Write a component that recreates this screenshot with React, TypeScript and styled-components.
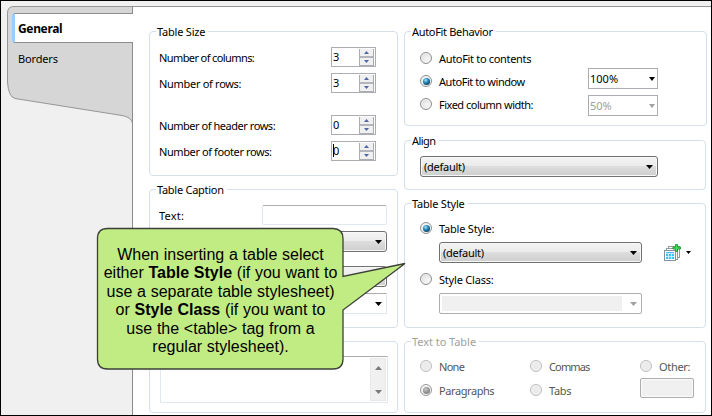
import React from "react";
import styled, { createGlobalStyle, css } from "styled-components";

const GlobalStyle = createGlobalStyle`
  *, *::before, *::after { box-sizing: border-box; }
  body { margin: 0; overflow: hidden; }
`;

const Window = styled.div`
  position: relative;
  display: flex;
  width: 712px;
  height: 416px;
  border: 1px solid #000;
  background: #f0f0f0;
  font: 11px/14px "Noto Sans", Tahoma, sans-serif;
  letter-spacing: -0.3px;
  color: #000;
  overflow: hidden;
`;

const Sidebar = styled.nav`
  position: relative;
  flex: none;
  width: 132px;
  display: flex;
  flex-direction: column;
  padding: 12px 0 0 11px;
`;

const SidebarShape = styled.svg`
  position: absolute;
  left: 0;
  top: 0;
`;

const Tab = styled.div<{ $active?: boolean }>`
  position: relative;
  height: 30px;
  line-height: 30px;
  padding-left: 5px;
  border: 1px solid transparent;
  border-right: 0;
  letter-spacing: -0.15px;
  ${({ $active }) =>
    $active &&
    css`
      background: #fff;
      border-color: #8c8c8c;
      border-left: 3px solid #99ccff;
      border-radius: 3px 0 0 3px;
      padding-left: 3px;
      font-size: 12px;
      font-weight: 700;
      letter-spacing: -0.35px;
    `}
`;

const Page = styled.main`
  flex: 1;
  display: grid;
  grid-template-columns: 249px 303px;
  column-gap: 6px;
  align-items: start;
  margin-top: 5px;
  padding: 24px 0 0 16px;
  border-top: 1px solid #969696;
  background: #fff;
`;

const Column = styled.div`
  display: flex;
  flex-direction: column;
  gap: 13px;
`;

const Group = styled.section<{ $h: number; $w?: number; $top?: number }>`
  display: flex;
  flex-direction: column;
  width: ${({ $w }) => ($w ? `${$w}px` : "auto")};
  height: ${({ $h }) => $h}px;
  margin-top: ${({ $top }) => $top ?? 0}px;
  border: 1px solid #d5dfe9;
  border-radius: 4px;
`;

const Legend = styled.h2<{ $disabled?: boolean; $ls?: number }>`
  align-self: flex-start;
  height: 14px;
  margin: -8px 0 0 6px;
  padding: 0 3px 0 1px;
  background: #fff;
  color: ${({ $disabled }) => ($disabled ? "#a0a0a0" : "#000")};
  font-size: 11px;
  font-weight: 400;
  line-height: 15px;
  letter-spacing: ${({ $ls }) => $ls ?? -0.2}px;
`;

const Row = styled.div<{ $top: number; $left?: number; $h?: number }>`
  display: flex;
  align-items: center;
  flex: none;
  height: ${({ $h }) => $h ?? 21}px;
  margin-top: ${({ $top }) => $top}px;
  padding-left: ${({ $left }) => $left ?? 9}px;
`;

const AutoFitFields = styled.div`
  display: grid;
  grid-template-columns: 168px 70px;
  align-items: start;
  padding: 13px 0 0 15px;
`;

const Stack = styled.div<{ $gap: number; $top?: number }>`
  display: flex;
  flex-direction: column;
  gap: ${({ $gap }) => $gap}px;
  margin-top: ${({ $top }) => $top ?? 0}px;
`;

const Label = styled.span<{ $w?: number; $ls?: number }>`
  flex: none;
  width: ${({ $w }) => ($w ? `${$w}px` : "auto")};
  padding-top: 1px;
  letter-spacing: ${({ $ls }) => $ls ?? -0.3}px;
  white-space: nowrap;
`;

const Spinner = styled.div`
  display: flex;
  width: 45px;
  height: 20px;
  border: 1px solid #abadb3;
  background: #fff;
`;

const SpinnerValue = styled.span`
  flex: 1;
  padding-left: 1px;
  line-height: 17px;
`;

const Caret = styled.i`
  float: left;
  width: 1px;
  height: 13px;
  margin: 2px -1px 0 0;
  background: #000;
`;

const SpinnerButtons = styled.div`
  display: flex;
  flex-direction: column;
  width: 15px;
  margin: 1px 1px 0 0;
  border: 1px solid #abadb3;
  border-top: 0;
  height: 17px;
`;

const SpinnerButton = styled.div`
  flex: 1;
  display: flex;
  align-items: center;
  justify-content: center;
  background: #f0f0f0;
  & + & {
    border-top: 2px solid #b4b5bb;
  }
`;

const TextInput = styled.div<{ $w: number; $disabled?: boolean }>`
  width: ${({ $w }) => $w}px;
  height: 20px;
  border: 1px solid #e2e8ef;
  border-top-color: #abadb3;
  border-radius: 2px;
  background: #fff;
  ${({ $disabled }) =>
    $disabled &&
    css`
      border-color: #adadad;
      background: #f0f0f0;
      box-shadow: inset 0 0 0 1px #fafafa;
    `}
`;

const looks = {
  button: css`
    border: 1px solid #707070;
    border-radius: 3px;
    background: linear-gradient(#f3f3f3, #ebebeb 48%, #dddddd 50%, #cecece);
    box-shadow: inset 0 0 0 1px #f8f8f8;
  `,
  flat: css`
    border: 1px solid #abadb3;
    background: #fff;
  `,
  light: css`
    border: 1px solid #e2e8ef;
    border-top-color: #abadb3;
    background: #fff;
  `,
  muted: css`
    border: 1px solid #adadad;
    border-radius: 2px;
    background: #fff;
  `,
};

const ComboBox = styled.div<{
  $w: number;
  $look: keyof typeof looks;
  $disabled?: boolean;
}>`
  display: flex;
  align-items: center;
  flex: none;
  justify-content: space-between;
  width: ${({ $w }) => $w}px;
  height: 21px;
  padding: ${({ $look }) => ($look === "flat" ? "0 2px 0 1px" : "0 4px 0 3px")};
  letter-spacing: ${({ $look }) => ($look === "flat" ? "0" : "-0.25px")};
  color: ${({ $disabled }) => ($disabled ? "#a0a0a0" : "#000")};
  ${({ $look }) => looks[$look]}
`;

const EmptyField = styled.span`
  width: 180px;
  height: 15px;
  margin-left: -1px;
  background: #f0f0f0;
`;

const RadioOption = styled.div<{ $w?: number; $disabled?: boolean; $top?: number }>`
  display: flex;
  align-items: center;
  flex: none;
  gap: 7px;
  width: ${({ $w }) => ($w ? `${$w}px` : "auto")};
  height: 14px;
  margin-top: ${({ $top }) => $top ?? 0}px;
  color: ${({ $disabled }) => ($disabled ? "#555" : "#000")};
`;

const RadioRing = styled.span<{ $checked?: boolean; $disabled?: boolean }>`
  display: flex;
  align-items: center;
  justify-content: center;
  flex: none;
  width: 12px;
  height: 12px;
  border: 1px solid ${({ $disabled }) => ($disabled ? "#bcbcbc" : "#8e8f8f")};
  border-radius: 50%;
  box-shadow: inset 0 0 0 1px #f4f4f4;
  background: ${({ $checked }) =>
    $checked ? "#f0f0f0" : "radial-gradient(circle at 65% 65%, #f2f2f2 20%, #d4d4d4)"};
  ${({ $disabled, $checked }) =>
    $disabled && !$checked && "background: #ebebeb;"}
  ${({ $disabled, $checked }) => $disabled && $checked && "border-color: #999;"}
  &::after {
    content: "";
    display: ${({ $checked }) => ($checked ? "block" : "none")};
    width: 7px;
    height: 7px;
    flex: none;
    border-radius: 50%;
    background: ${({ $disabled }) =>
      $disabled
        ? "radial-gradient(circle at 40% 35%, #c8c8c8, #8c8c8c 55%, #858585)"
        : "radial-gradient(circle at 38% 32%, #a8e4fa, #2c8fc0 35%, #123f60 75%)"};
  }
`;

const TextArea = styled.div`
  display: flex;
  justify-content: flex-end;
  width: 228px;
  height: 47px;
  padding: 1px;
  border: 1px solid #e2e8ef;
  border-top-color: #abadb3;
  background: #fff;
`;

const ScrollBar = styled.div`
  display: flex;
  flex-direction: column;
  align-items: center;
  justify-content: space-between;
  width: 16px;
  padding: 7px 0 6px;
  border: 1px solid #e8e8e8;
  background: #f0f0f0;
`;

const StyleMenu = styled.div`
  display: flex;
  align-items: center;
  gap: 5px;
  margin-left: 22px;
`;

const Callout = styled.aside`
  position: absolute;
  left: 96px;
  top: 227px;
  width: 247px;
  height: 142px;
`;

const CalloutShape = styled.svg`
  position: absolute;
  left: 0;
  top: 0;
  overflow: visible;
`;

const CalloutText = styled.p`
  position: relative;
  margin: 18px 0 0;
  font: 16px/18.45px "Liberation Sans", Arial, sans-serif;
  letter-spacing: 0;
  word-spacing: 0.3px;
  text-align: center;
  white-space: nowrap;
`;

function Arrow({ color = "#000", up = false, w = 7, h = 4 }) {
  return (
    <svg width={w} height={h} viewBox={`0 0 ${w} ${h}`}>
      <path
        d={up ? `M0 ${h}H${w}L${w / 2} 0Z` : `M0 0H${w}L${w / 2} ${h}Z`}
        fill={color}
      />
    </svg>
  );
}

function NumberRow({ label, value, top, ls, focused }: {
  label: string; value: number; top: number; ls?: number; focused?: boolean;
}) {
  return (
    <Row $top={top} $h={20}>
      <Label $w={172} $ls={ls}>{label}</Label>
      <Spinner>
        <SpinnerValue>{focused && <Caret />}{value}</SpinnerValue>
        <SpinnerButtons>
          <SpinnerButton><Arrow up color="#4b66ac" w={5} h={3} /></SpinnerButton>
          <SpinnerButton><Arrow color="#4b66ac" w={5} h={3} /></SpinnerButton>
        </SpinnerButtons>
      </Spinner>
    </Row>
  );
}

function Radio({ label, checked, disabled, w, ls, top }: {
  label: string; checked?: boolean; disabled?: boolean; w?: number; ls?: number; top?: number;
}) {
  return (
    <RadioOption $w={w} $disabled={disabled} $top={top}>
      <RadioRing $checked={checked} $disabled={disabled} />
      <Label $ls={ls}>{label}</Label>
    </RadioOption>
  );
}

function NewStyleIcon() {
  return (
    <svg width="17" height="18" viewBox="0 0 17 18">
      <g shapeRendering="crispEdges">
        <rect x="4.5" y="2.5" width="11" height="11" fill="#fff" stroke="#929aa0" />
        <rect x="6" y="4" width="6" height="1" fill="#d04030" />
        <rect x="2.5" y="4.5" width="11" height="11" fill="#fff" stroke="#929aa0" />
        <rect x="0.5" y="6.5" width="11" height="10" fill="#fff" stroke="#87929a" />
        <rect x="2" y="8" width="8" height="7" fill="#43c0f4" />
        <path d="M2 9.5H10M2 12.5H10M4.5 10V15M7.5 10V15" stroke="#c4edff" />
      </g>
      <path
        d="M11.5 .5h2v2.5H16.500v2H13.500v2.500h-2V5H9V3h2.500z"
        fill="#42e052"
        stroke="#159b2b"
        strokeWidth=".9"
      />
    </svg>
  );
}

export default function App() {
  return (
    <>
      <GlobalStyle />
      <Window>
        <Sidebar>
          <SidebarShape width="132" height="414" viewBox="1 1 132 414">
            <path
              d="M133 6.500H14Q7.500 6.500 7.500 13V82Q8.500 97 15 98.500L122 115.500Q131 117 132.500 123V6Z"
              fill="#d6d6d6"
              stroke="#969696"
            />
            <path d="M132.500 6V415" stroke="#8c8c8c" />
          </SidebarShape>
          <Tab $active>General</Tab>
          <Tab>Borders</Tab>
        </Sidebar>

        <Page>
          <Column>
            <Group $h={145}>
              <Legend>Table Size</Legend>
              <NumberRow label="Number of columns:" value={3} top={9} ls={-0.6} />
              <NumberRow label="Number of rows:" value={3} top={6} />
              <NumberRow label="Number of header rows:" value={0} top={22} ls={-0.46} />
              <NumberRow label="Number of footer rows:" value={0} top={6} ls={-0.4} focused />
            </Group>
            <Group $h={139}>
              <Legend $ls={-0.27}>Table Caption</Legend>
              <Row $top={9} $h={20}>
                <Label $w={103} $ls={0.2}>Text:</Label>
                <TextInput $w={125} />
              </Row>
              <Row $top={6} $left={112}>
                <ComboBox $w={125} $look="button"><span /><Arrow /></ComboBox>
              </Row>
              <Row $top={14} $left={112}>
                <ComboBox $w={125} $look="button"><span /><Arrow /></ComboBox>
              </Row>
              <Row $top={6} $left={112}>
                <ComboBox $w={125} $look="light"><span /><Arrow /></ComboBox>
              </Row>
            </Group>
            <Group $h={72}>
              <Row $top={14} $left={10} $h={47}>
                <TextArea>
                  <ScrollBar>
                    <Arrow up color="#7c7c7c" />
                    <Arrow color="#7c7c7c" />
                  </ScrollBar>
                </TextArea>
              </Row>
            </Group>
          </Column>

          <Column>
            <Group $h={95}>
              <Legend $ls={-0.32}>AutoFit Behavior</Legend>
              <AutoFitFields>
                <Stack $gap={9}>
                  <Radio label="AutoFit to contents" ls={-0.32} />
                  <Radio label="AutoFit to window" checked ls={-0.45} />
                  <Radio label="Fixed column width:" ls={-0.5} />
                </Stack>
                <Stack $gap={6} $top={17}>
                  <ComboBox $w={70} $look="flat">100%<Arrow w={6} /></ComboBox>
                  <ComboBox $w={70} $look="flat" $disabled>
                    50%<Arrow w={6} color="#a0a0a0" />
                  </ComboBox>
                </Stack>
              </AutoFitFields>
            </Group>
            <Group $h={50} $w={302} $top={1}>
              <Legend $ls={-0.55}>Align</Legend>
              <Row $top={9} $left={15}>
                <ComboBox $w={238} $look="button">(default)<Arrow /></ComboBox>
              </Row>
            </Group>
            <Group $h={125} $w={302}>
              <Legend>Table Style</Legend>
              <Row $top={11} $left={15} $h={14}>
                <Radio label="Table Style:" checked ls={-0.2} />
              </Row>
              <Row $top={7} $left={34}>
                <ComboBox $w={203} $look="button">(default)<Arrow /></ComboBox>
                <StyleMenu>
                  <NewStyleIcon />
                  <Arrow w={5} h={3} />
                </StyleMenu>
              </Row>
              <Row $top={9} $left={15} $h={14}>
                <Radio label="Style Class:" ls={-0.2} />
              </Row>
              <Row $top={7} $left={34}>
                <ComboBox $w={203} $look="muted">
                  <EmptyField /><Arrow color="#a0a0a0" />
                </ComboBox>
              </Row>
            </Group>
            <Group $h={72} $w={302}>
              <Legend $disabled $ls={-0.05}>Text to Table</Legend>
              <Row $top={11} $left={15} $h={14}>
                <Radio label="None" disabled w={110} ls={-0.7} />
                <Radio label="Commas" disabled w={110} ls={-0.85} />
                <Radio label="Other:" disabled />
              </Row>
              <Row $top={5} $left={15} $h={20}>
                <Radio label="Paragraphs" checked disabled w={110} top={4} ls={-0.42} />
                <Radio label="Tabs" disabled w={110} top={4} />
                <TextInput $w={54} $disabled />
              </Row>
            </Group>
          </Column>
        </Page>

        <Callout>
          <CalloutShape width="310" height="144" viewBox="97 228 310 144">
            <path
              d="M107.500 228.500H333Q343 229 343 238.500V276.500L405 263.500L343 310V359Q343 369 333 369H107.500Q97.500 369 97.500 359V238.500Q97.500 228.500 107.500 228.500Z"
              fill="#c1ec84"
              stroke="#3b3f36"
              strokeWidth="1.300"
            />
          </CalloutShape>
          <CalloutText>
            When inserting a table select<br />
            either <b>Table Style</b> (if you want to<br />
            use a separate table stylesheet)<br />
            or <b>Style Class</b> (if you want to<br />
            use the &lt;table&gt; tag from a<br />
            regular stylesheet).
          </CalloutText>
        </Callout>
      </Window>
    </>
  );
}
